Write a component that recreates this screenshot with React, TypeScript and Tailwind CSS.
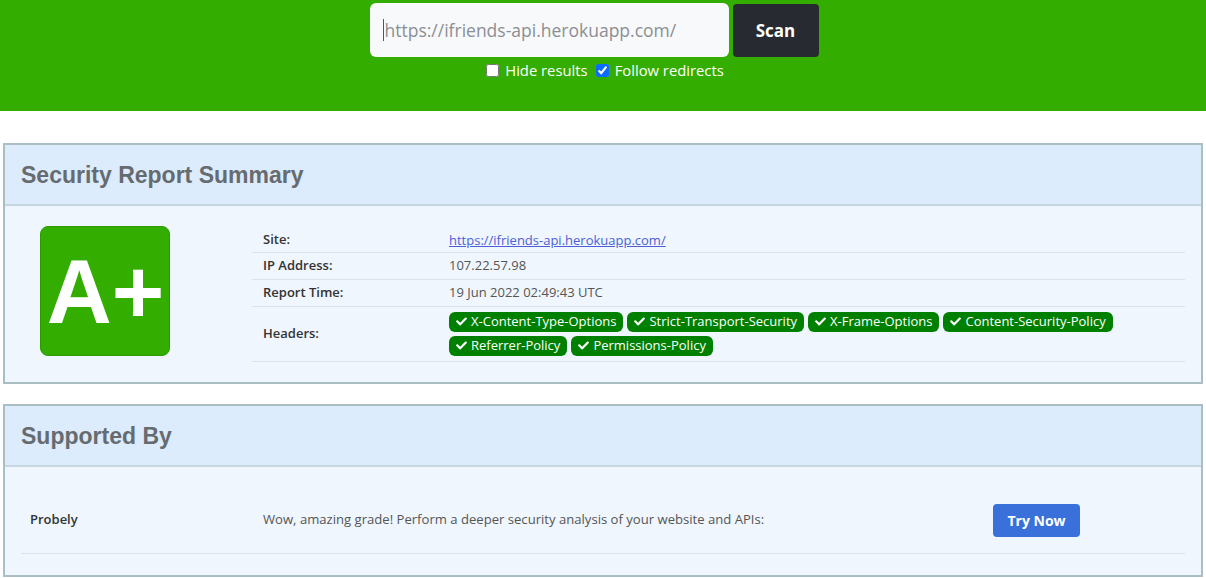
import { FaCheck } from 'react-icons/fa';

const headers = [
	'X-Content-Type-Options',
	'Strict-Transport-Security',
	'X-Frame-Options',
	'Content-Security-Policy',
	'Referrer-Policy',
	'Permissions-Policy',
];

const App = () => {
	return (
		<div className="min-h-[578px] bg-white font-['Open_Sans',sans-serif] text-[#333]">
			{/* top scan bar */}
			<div className="h-[111px] bg-[#33ad00] pt-[3px]">
				<div className="flex justify-center gap-[4px] pr-[18px]">
					<div className="flex h-[54px] w-[359px] items-center rounded-[6px] bg-[#f8f9fa] pl-[13px] text-[17.5px] text-[#8a8f94]">
						<span className="mr-[1px] h-[22px] w-px bg-[#555]" />
						https://ifriends-api.herokuapp.com/
					</div>
					<button className="mt-[1px] h-[53px] w-[86px] rounded-[4px] bg-[#272a30] text-[17px] font-bold text-white">
						Scan
					</button>
				</div>
				<div className="mt-[2px] flex items-center justify-center gap-[8px] pl-[4px] text-[14.8px] text-white">
					<label className="flex items-center gap-[6px]">
						<input type="checkbox" className="h-[13px] w-[13px]" />
						Hide results
					</label>
					<label className="flex items-center gap-[6px]">
						<input type="checkbox" defaultChecked className="h-[13px] w-[13px] accent-[#0b6cff]" />
						Follow redirects
					</label>
				</div>
			</div>

			<div className="flex flex-col gap-[20px] px-[3px] pt-[32px]">
				{/* summary card */}
				<section className="border-2 border-[#a9bfc4] bg-[#eff6fe]">
					<h2 className="flex h-[61px] items-center border-b-2 border-[#c4d6de] bg-[#dcecfc] px-[16px] pt-[2px] font-['Liberation_Sans',Arial,sans-serif] text-[23px] font-bold text-[#666b70]">
						Security Report Summary
					</h2>
					<div className="flex pb-[20px] pt-[20px]">
						<div className="w-[247px] shrink-0 pl-[35px]">
							<div className="flex h-[130px] w-[130px] items-center justify-center rounded-[8px] border border-[#2e9a00] bg-[#33ad00] pl-[1px] pt-[2px] font-['Liberation_Sans',Arial,sans-serif] text-[90px] font-bold leading-none text-white">
								A+
							</div>
						</div>
						<table className="mr-[16px] h-fit flex-1 border-collapse text-[13px]">
							<tbody>
								<tr className="h-[26px] border-b border-[#dee2e6]">
									<th className="w-[197px] pl-[11px] pt-[2px] text-left font-semibold">Site:</th>
									<td className="pt-[3px]">
										<a href="#" className="text-[#4d5fd6] underline">
											https://ifriends-api.herokuapp.com/
										</a>
									</td>
								</tr>
								<tr className="h-[27px] border-b border-[#dee2e6]">
									<th className="pl-[11px] pt-[1px] text-left font-semibold">IP Address:</th>
									<td className="pt-[1px] text-[#555]">107.22.57.98</td>
								</tr>
								<tr className="h-[27px] border-b border-[#dee2e6]">
									<th className="pl-[11px] pt-[1px] text-left font-semibold">Report Time:</th>
									<td className="pt-[1px] text-[#555]">19 Jun 2022 02:49:43 UTC</td>
								</tr>
								<tr className="border-b border-[#dee2e6]">
									<th className="pl-[11px] text-left font-semibold">Headers:</th>
									<td className="py-[5px]">
										<div className="flex flex-wrap gap-x-[4px] gap-y-[4px]">
											{headers.map((h) => (
												<span
													key={h}
													className="flex h-[20px] items-center gap-[4px] rounded-[6px] bg-[#008000] px-[7px] text-[13px] text-white"
												>
													<FaCheck className="h-[11px] w-[11px]" />
													{h}
												</span>
											))}
										</div>
									</td>
								</tr>
							</tbody>
						</table>
					</div>
				</section>

				{/* supported by card */}
				<section className="border-2 border-[#a9bfc4] bg-[#eff6fe]">
					<h2 className="flex h-[61px] items-center border-b-2 border-[#c4d6de] bg-[#dcecfc] px-[16px] pt-[2px] font-['Liberation_Sans',Arial,sans-serif] text-[23px] font-bold text-[#666b70]">
						Supported By
					</h2>
					<div className="px-[16px] pb-[21px] pt-[21px]">
						<div className="flex h-[66px] items-center border-b border-[#dee2e6] text-[13px]">
							<div className="w-[242px] pl-[9px] font-semibold">Probely</div>
							<div className="w-[730px] text-[13.1px] text-[#555]">
								Wow, amazing grade! Perform a deeper security analysis of your website and APIs:
							</div>
							<button className="h-[33px] w-[87px] rounded-[4px] bg-[#3a70d9] text-[14px] font-bold text-white">
								Try Now
							</button>
						</div>
					</div>
				</section>
			</div>
		</div>
	);
};

export default App;
